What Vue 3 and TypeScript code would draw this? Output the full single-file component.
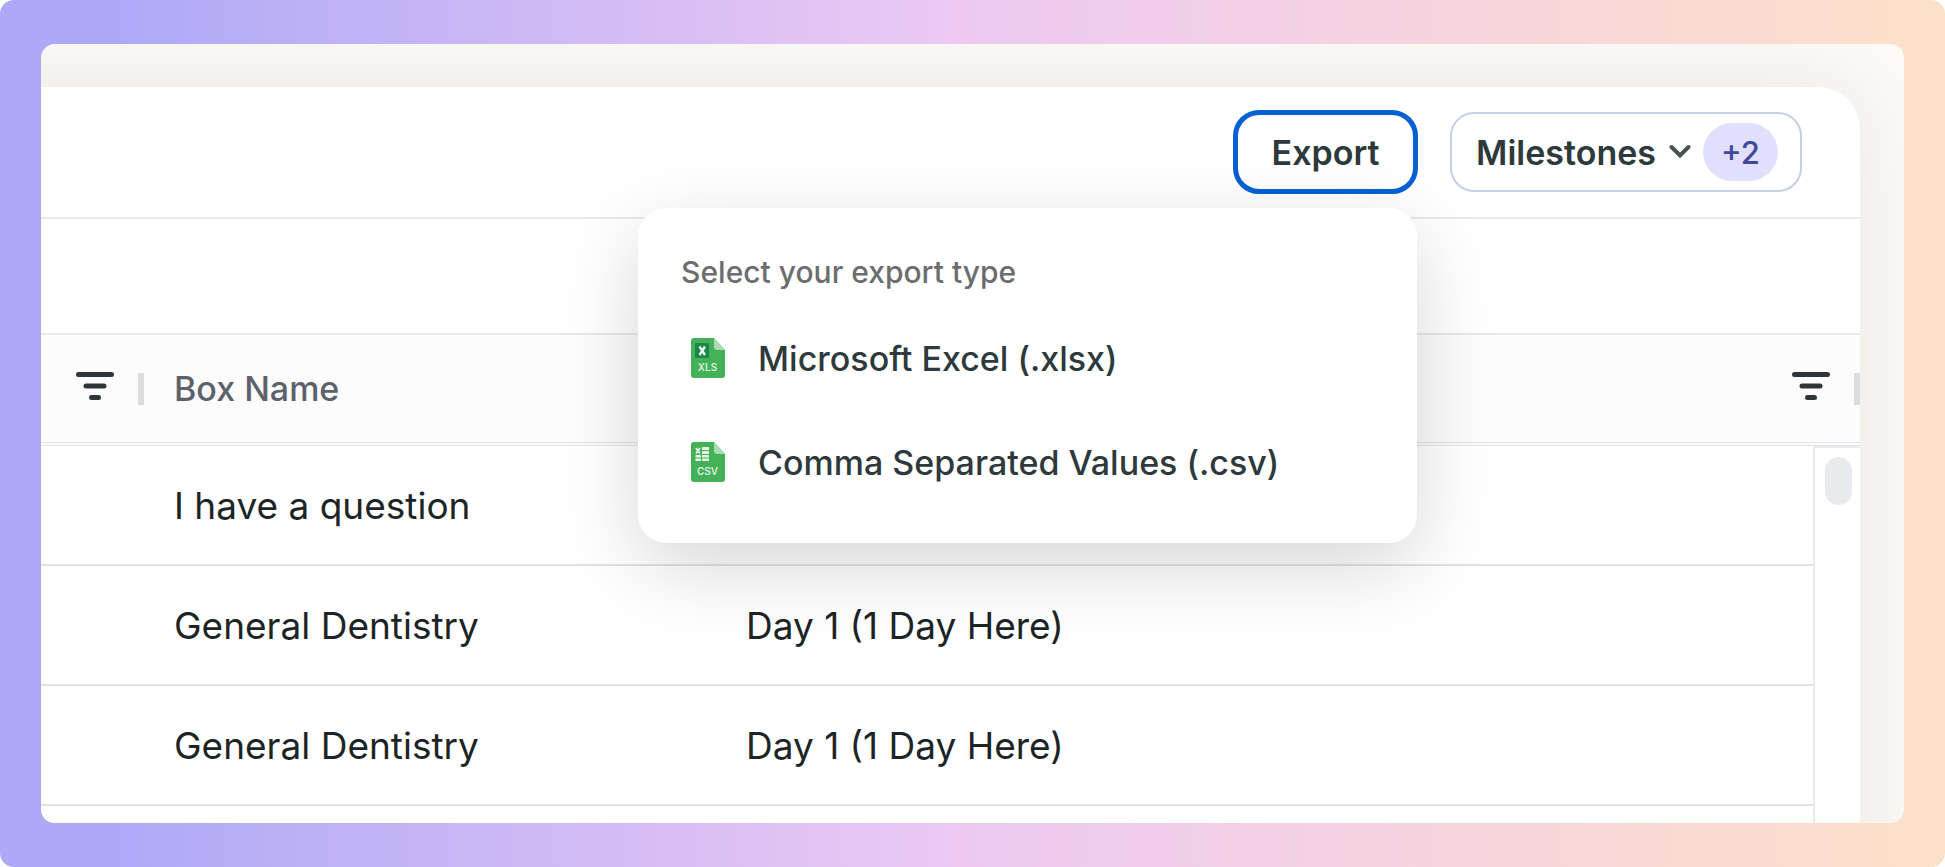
<script setup lang="ts">
import { ref } from 'vue'

interface Box {
  name: string
  stage: string
}

interface ExportType {
  id: 'xls' | 'csv'
  label: string
}

const boxes: Box[] = [
  { name: 'I have a question', stage: '' },
  { name: 'General Dentistry', stage: 'Day 1 (1 Day Here)' },
  { name: 'General Dentistry', stage: 'Day 1 (1 Day Here)' },
]

const exportTypes: ExportType[] = [
  { id: 'xls', label: 'Microsoft Excel (.xlsx)' },
  { id: 'csv', label: 'Comma Separated Values (.csv)' },
]

const menuOpen = ref(true)
</script>

<template>
  <main class="frame">
    <div class="stage">
      <section class="panel">
        <header class="toolbar">
          <div class="export">
            <button class="export-button" type="button" :aria-expanded="menuOpen" @click="menuOpen = !menuOpen">
              Export
            </button>
            <div v-if="menuOpen" class="menu">
              <p class="menu-title">Select your export type</p>
              <button v-for="type in exportTypes" :key="type.id" class="menu-item" type="button">
                <svg class="file-icon" viewBox="0 0 34 40" aria-hidden="true">
                  <path d="M3 0H23L34 12V37Q34 40 31 40H3Q0 40 0 37V3Q0 0 3 0Z" fill="#44b058" />
                  <path d="M23 0L34 12H26Q23 12 23 9Z" fill="#aadcb3" />
                  <template v-if="type.id === 'xls'">
                    <rect x="4" y="5" width="14" height="15" rx="1" fill="#18884a" />
                    <path d="M8.500 8.500L14 17M14 8.500L8.500 17" stroke="#e9f6ec" stroke-width="2.400" />
                    <text x="16.500" y="33" class="file-label">XLS</text>
                  </template>
                  <template v-else>
                    <path d="M11 5H18V8H11ZM11 9H18V12H11ZM11 13H18V15.500H11ZM11 16.500H18V19H11ZM4.500 13H10V15.500H4.500ZM4.500 16.500H10V19H4.500Z" fill="#e4f4e7" />
                    <path d="M5 6L9 11.500M9 6L5 11.500" stroke="#e4f4e7" stroke-width="1.800" />
                    <text x="16.500" y="33" class="file-label">CSV</text>
                  </template>
                </svg>
                <span>{{ type.label }}</span>
              </button>
            </div>
          </div>
          <button class="milestones" type="button">
            <span>Milestones</span>
            <svg class="chevron" viewBox="0 0 22 16" aria-hidden="true">
              <path d="M2.500 3L11 11.500L19.500 3" fill="none" stroke="#4a5152" stroke-width="4" stroke-linecap="round" />
            </svg>
            <span class="badge">+2</span>
          </button>
        </header>
        <div class="subbar"></div>
        <table class="grid">
          <colgroup>
            <col class="col-filter" />
            <col class="col-name" />
            <col />
            <col class="col-scroll" />
          </colgroup>
          <thead>
            <tr>
              <th>
                <div class="head-tools">
                  <button class="filter" type="button" aria-label="Filter">
                    <svg viewBox="0 0 38 34" aria-hidden="true">
                      <path d="M2.500 2.500H35.500M10 14H28M15.500 25.500H22.500" stroke="#2f3638" stroke-width="5" stroke-linecap="round" />
                    </svg>
                  </button>
                  <span class="divider"></span>
                </div>
              </th>
              <th class="text-cell" scope="col">Box Name</th>
              <th colspan="2">
                <div class="head-tools">
                  <button class="filter" type="button" aria-label="Filter">
                    <svg viewBox="0 0 38 34" aria-hidden="true">
                      <path d="M2.500 2.500H35.500M10 14H28M15.500 25.500H22.500" stroke="#2f3638" stroke-width="5" stroke-linecap="round" />
                    </svg>
                  </button>
                  <span class="divider"></span>
                </div>
              </th>
            </tr>
          </thead>
          <tbody>
            <tr v-for="(box, index) in boxes" :key="index" class="row">
              <td></td>
              <td class="text-cell">{{ box.name }}</td>
              <td class="text-cell">{{ box.stage }}</td>
              <td v-if="index === 0" class="scroll-cell" :rowspan="boxes.length + 1">
                <div class="thumb"></div>
              </td>
            </tr>
            <tr class="rest">
              <td colspan="3"></td>
            </tr>
          </tbody>
        </table>
      </section>
    </div>
  </main>
</template>

<style>
body {
  margin: 0;
  background: #fff;
}
</style>

<style scoped>
* {
  box-sizing: border-box;
}

.frame {
  display: flex;
  min-height: 100vh;
  padding: 44px 41px;
  border-radius: 14px;
  background: linear-gradient(90deg, #aea9f7 6%, #edc9f3 49%, #fbe0ca 98%);
  font-family: Inter, 'Liberation Sans', sans-serif;
  color: #1d2426;
}

.stage {
  display: flex;
  flex: 1;
  padding: 43px 44px 0 0;
  overflow: hidden;
  border-radius: 14px;
  background: #fbfaf7;
}

/* The panel runs past the left and bottom edges so its shadow does not fade there. */
.panel {
  flex: 1;
  margin: 0 0 -120px -160px;
  padding: 0 0 120px 160px;
  border-top-right-radius: 42px;
  background: #fff;
  box-shadow: 0 0 80px rgba(30, 30, 10, 0.09);
}

button {
  margin: 0;
  font: inherit;
  color: inherit;
  cursor: pointer;
}

.toolbar {
  display: flex;
  align-items: center;
  justify-content: flex-end;
  gap: 32px;
  height: 132px;
  padding-right: 58px;
  border-bottom: 2px solid #e9e9e9;
}

.export {
  position: relative;
}

.export-button {
  display: block;
  width: 185px;
  height: 84px;
  padding: 0;
  border: 5px solid #0460d3;
  border-radius: 26px;
  background: #fff;
  font-size: 34px;
  font-weight: 600;
  color: #2d393b;
}

.menu {
  position: absolute;
  top: 98px;
  right: 1px;
  z-index: 1;
  width: 779px;
  padding: 42px 43px 29px;
  border-radius: 28px;
  background: #fff;
  box-shadow: 0 24px 80px rgba(0, 0, 0, 0.16);
}

.menu-title {
  margin: 0 0 12px;
  font-size: 30px;
  font-weight: 500;
  line-height: 44px;
  color: #6b6d6e;
}

.menu-item {
  display: flex;
  align-items: center;
  gap: 33px;
  width: 100%;
  height: 104px;
  padding: 0 10px;
  border: 0;
  background: none;
  font-size: 34px;
  font-weight: 500;
  color: #2d393b;
  text-align: left;
  white-space: nowrap;
}

.file-icon {
  width: 34px;
  height: 40px;
}

.file-label {
  font-size: 10px;
  font-weight: 600;
  text-anchor: middle;
  fill: #d8f0dc;
}

.milestones {
  display: flex;
  align-items: center;
  height: 80px;
  padding: 0 22px 0 24px;
  border: 2px solid #c6cfe8;
  border-radius: 24px;
  background: #fff;
  font-size: 34px;
  font-weight: 600;
  color: #2d393b;
}

.chevron {
  width: 22px;
  height: 16px;
  margin: 0 12px 0 13px;
}

.badge {
  display: flex;
  align-items: center;
  justify-content: center;
  width: 75px;
  height: 58px;
  border-radius: 29px;
  background: #e0e0fe;
  font-size: 31px;
  font-weight: 500;
  color: #42479a;
}

.subbar {
  height: 116px;
  border-bottom: 2px solid #e9e9e9;
}

.grid {
  width: 100%;
  border-spacing: 0;
  table-layout: fixed;
}

.col-filter {
  width: 103px;
}

.col-name {
  width: 572px;
}

.col-scroll {
  width: 47px;
}

th,
td {
  padding: 0;
}

th {
  height: 111px;
  border-bottom: 4px double #e3e4e9;
  background: #fcfcfc;
  font-size: 34px;
  font-weight: 500;
  color: #5d616b;
  text-align: left;
}

th.text-cell,
td.text-cell {
  padding-left: 30px;
}

.head-tools {
  display: flex;
  align-items: center;
  justify-content: flex-end;
  gap: 24px;
}

.filter {
  padding: 0;
  border: 0;
  background: none;
}

.filter svg {
  display: block;
  width: 38px;
  height: 34px;
}

.divider {
  width: 6px;
  height: 32px;
  background: #dcdcde;
}

.row td {
  height: 120px;
  border-bottom: 2px solid #e1e2e3;
  font-size: 37px;
}

.row td.scroll-cell {
  padding: 9px 0 0 10px;
  border-top: 2px solid #e9eaee;
  border-bottom: 0;
  border-left: 2px solid #e9eaee;
  vertical-align: top;
}

.thumb {
  width: 27px;
  height: 48px;
  border-radius: 14px;
  background: #e9eaee;
}

.rest td {
  height: 17px;
}
</style>
